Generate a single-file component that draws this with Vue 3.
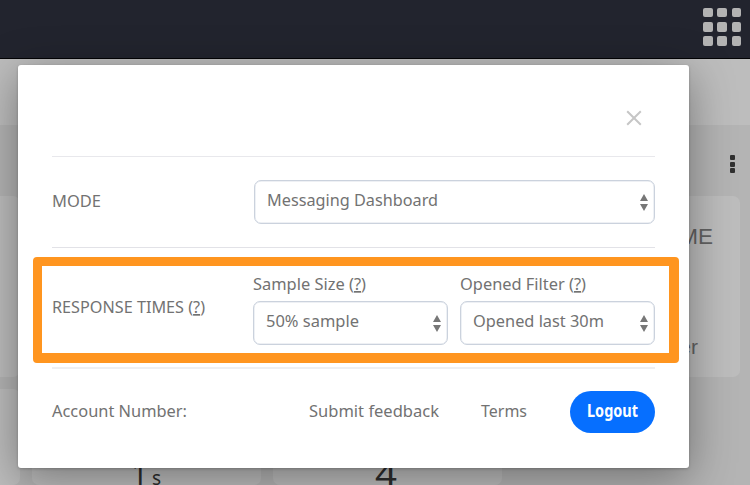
<script setup>
import { h } from 'vue'

// Single-line label condensed to a given width; parts wrapped in [] are underlined.
const FitText = (props) =>
  h('svg', { class: 'fit', width: props.w, height: 24, role: 'text' }, [
    h(
      'text',
      { x: 0, y: 18, textLength: props.w, lengthAdjust: 'spacingAndGlyphs' },
      props.t.split(/[[\]]/).map((s, i) => h('tspan', i % 2 ? { 'text-decoration': 'underline' } : {}, s))
    ),
  ])
FitText.props = ['t', 'w']
</script>

<template>
  <div class="page">
    <header class="topbar">
      <div class="apps"><i v-for="n in 9" :key="n"></i></div>
    </header>
    <div class="subbar"></div>
    <main class="board">
      <div class="tools">
        <div class="kebab"><i></i><i></i><i></i></div>
      </div>
      <div class="row first">
        <section class="card side"></section>
        <section class="card wide">
          <span class="title">RESPONSE TIME</span>
          <span class="sub">Longer</span>
        </section>
      </div>
      <div class="row second">
        <section class="card side"></section>
        <section class="card stat one"><FitText t="1" :w="17" /><small>s</small></section>
        <section class="card stat four"><FitText t="4" :w="22" /></section>
      </div>
    </main>

    <div class="modal">
      <div class="modal-head">
        <svg class="close" width="16" height="16" viewBox="0 0 16 16">
          <path d="M1.2 1.2 14.8 14.8M14.8 1.2 1.2 14.8" />
        </svg>
      </div>
      <div class="mode">
        <div class="name"><FitText t="MODE" :w="49" /></div>
        <div class="select">
          <FitText t="Messaging Dashboard" :w="171" />
          <svg class="arrows" width="8" height="17" viewBox="0 0 8 17"><path d="M0 7 4 0 8 7zM0 10 4 17 8 10z" /></svg>
        </div>
      </div>
      <div class="times">
        <div class="name"><FitText t="RESPONSE TIMES ([?])" :w="153" /></div>
        <div class="field size">
          <FitText t="Sample Size ([?])" :w="113" />
          <div class="select">
            <FitText t="50% sample" :w="93" />
            <svg class="arrows" width="8" height="17" viewBox="0 0 8 17"><path d="M0 7 4 0 8 7zM0 10 4 17 8 10z" /></svg>
          </div>
        </div>
        <div class="field">
          <FitText t="Opened Filter ([?])" :w="126" />
          <div class="select">
            <FitText t="Opened last 30m" :w="131" />
            <svg class="arrows" width="8" height="17" viewBox="0 0 8 17"><path d="M0 7 4 0 8 7zM0 10 4 17 8 10z" /></svg>
          </div>
        </div>
      </div>
      <div class="foot">
        <FitText t="Account Number:" :w="135" />
        <FitText class="feedback" t="Submit feedback" :w="130" />
        <FitText class="terms" t="Terms" :w="46" />
        <button class="logout"><FitText t="Logout" :w="51" /></button>
      </div>
      <div class="highlight"></div>
    </div>
  </div>
</template>

<style>
body { margin: 0; overflow: hidden; }
.fit { display: block; flex: none; overflow: visible; fill: currentColor; }
</style>

<style scoped>
.page {
  position: relative;
  width: 750px;
  height: 485px;
  overflow: hidden;
  background: #b4b4b4;
  font-family: "Noto Sans", sans-serif;
  font-size: 17px;
  color: #727272;
}
.page * { box-sizing: border-box; }
.topbar {
  height: 59px;
  padding: 8px 9px 0 0;
  background: #22242e;
  border-bottom: 1px solid #030305;
  display: flex;
  justify-content: flex-end;
}
.apps {
  display: grid;
  grid-template-columns: repeat(3, 9.4px);
  grid-auto-rows: 9.4px;
  gap: 4.8px;
  height: 38px;
}
.apps i { background: #b3b3b3; border-radius: 2px; }
.subbar { height: 66px; background: #bdbdbd; }
.board { height: 360px; overflow: hidden; }
.tools { height: 71px; padding: 30px 15.5px 0 0; display: flex; justify-content: flex-end; }
.kebab { display: flex; flex-direction: column; gap: 1.5px; }
.kebab i { width: 5px; height: 5px; border-radius: 1px; background: #303030; }
.row { display: flex; gap: 12px; }
.first { height: 181px; }
.second { margin-top: 12px; height: 96px; }
.card { background: #bdbdbd; border-radius: 7px; }
.side { width: 20px; border-radius: 0 7px 7px 0; }
.wide {
  width: 708px;
  padding: 25px 27px 17px 0;
  display: flex;
  flex-direction: column;
  justify-content: space-between;
  align-items: flex-end;
  font-family: "Liberation Sans", sans-serif;
  color: #626262;
}
.title { font-size: 22.5px; line-height: 32px; }
.sub { font-size: 21px; line-height: 26px; margin-right: 15px; }
.stat { width: 229px; padding-top: 79px; display: flex; color: #2d2d2d; font-size: 33px; }
.stat.one { padding-left: 99px; }
.stat.four { padding-left: 102px; }
.stat small { font-size: 19px; line-height: 20px; margin-left: 4px; }

.modal {
  position: absolute;
  left: 18px;
  top: 65px;
  width: 671px;
  height: 403px;
  padding: 0 34px;
  background: #fff;
  border-radius: 3px;
  box-shadow: 0 10px 45px rgba(0, 0, 0, 0.38), 0 1px 3px rgba(0, 0, 0, 0.2);
}
.modal-head {
  height: 92px;
  padding: 45px 13px 0 0;
  border-bottom: 1px solid #e8e8ec;
  display: flex;
  justify-content: flex-end;
}
.close { fill: none; stroke: #c6c6c6; stroke-width: 2; }
.mode {
  height: 91px;
  padding-top: 23px;
  border-bottom: 1px solid #e2e2e7;
  display: flex;
}
.name { width: 202px; flex: none; }
.mode .name { padding-top: 9px; }
.select {
  flex: 1;
  height: 44px;
  padding: 7px 6px 0 12px;
  border: 1px solid #cbd2dd;
  border-radius: 7px;
  box-shadow: inset 0 0 0 0.5px #dde2ea;
  display: flex;
  justify-content: space-between;
}
.arrows { margin-top: 6px; fill: #777; }
.times {
  height: 121px;
  padding-top: 24px;
  border-bottom: 2px solid #efeff1;
  display: flex;
}
.times .name { padding-top: 23px; width: 201px; }
.field { width: 195px; flex: none; }
.field.size { margin-right: 12px; }
.field .select { margin-top: 5px; }
.foot { padding-top: 22px; display: flex; }
.foot > .fit { margin-top: 8px; }
.foot > .feedback { margin-left: 122px; }
.foot > .terms { margin-left: 42px; }
.logout {
  width: 85px;
  height: 42px;
  margin-left: auto;
  padding: 0 0 2px;
  border: 0;
  border-radius: 21px;
  background: #066fff;
  color: #fff;
  font: 700 17px "Noto Sans", sans-serif;
  display: flex;
  align-items: center;
  justify-content: center;
}
.highlight {
  position: absolute;
  left: 15px;
  top: 192px;
  width: 646px;
  height: 106px;
  border: solid #ff951f;
  border-width: 9px 10px 10px 9px;
  border-radius: 4px;
}
</style>
